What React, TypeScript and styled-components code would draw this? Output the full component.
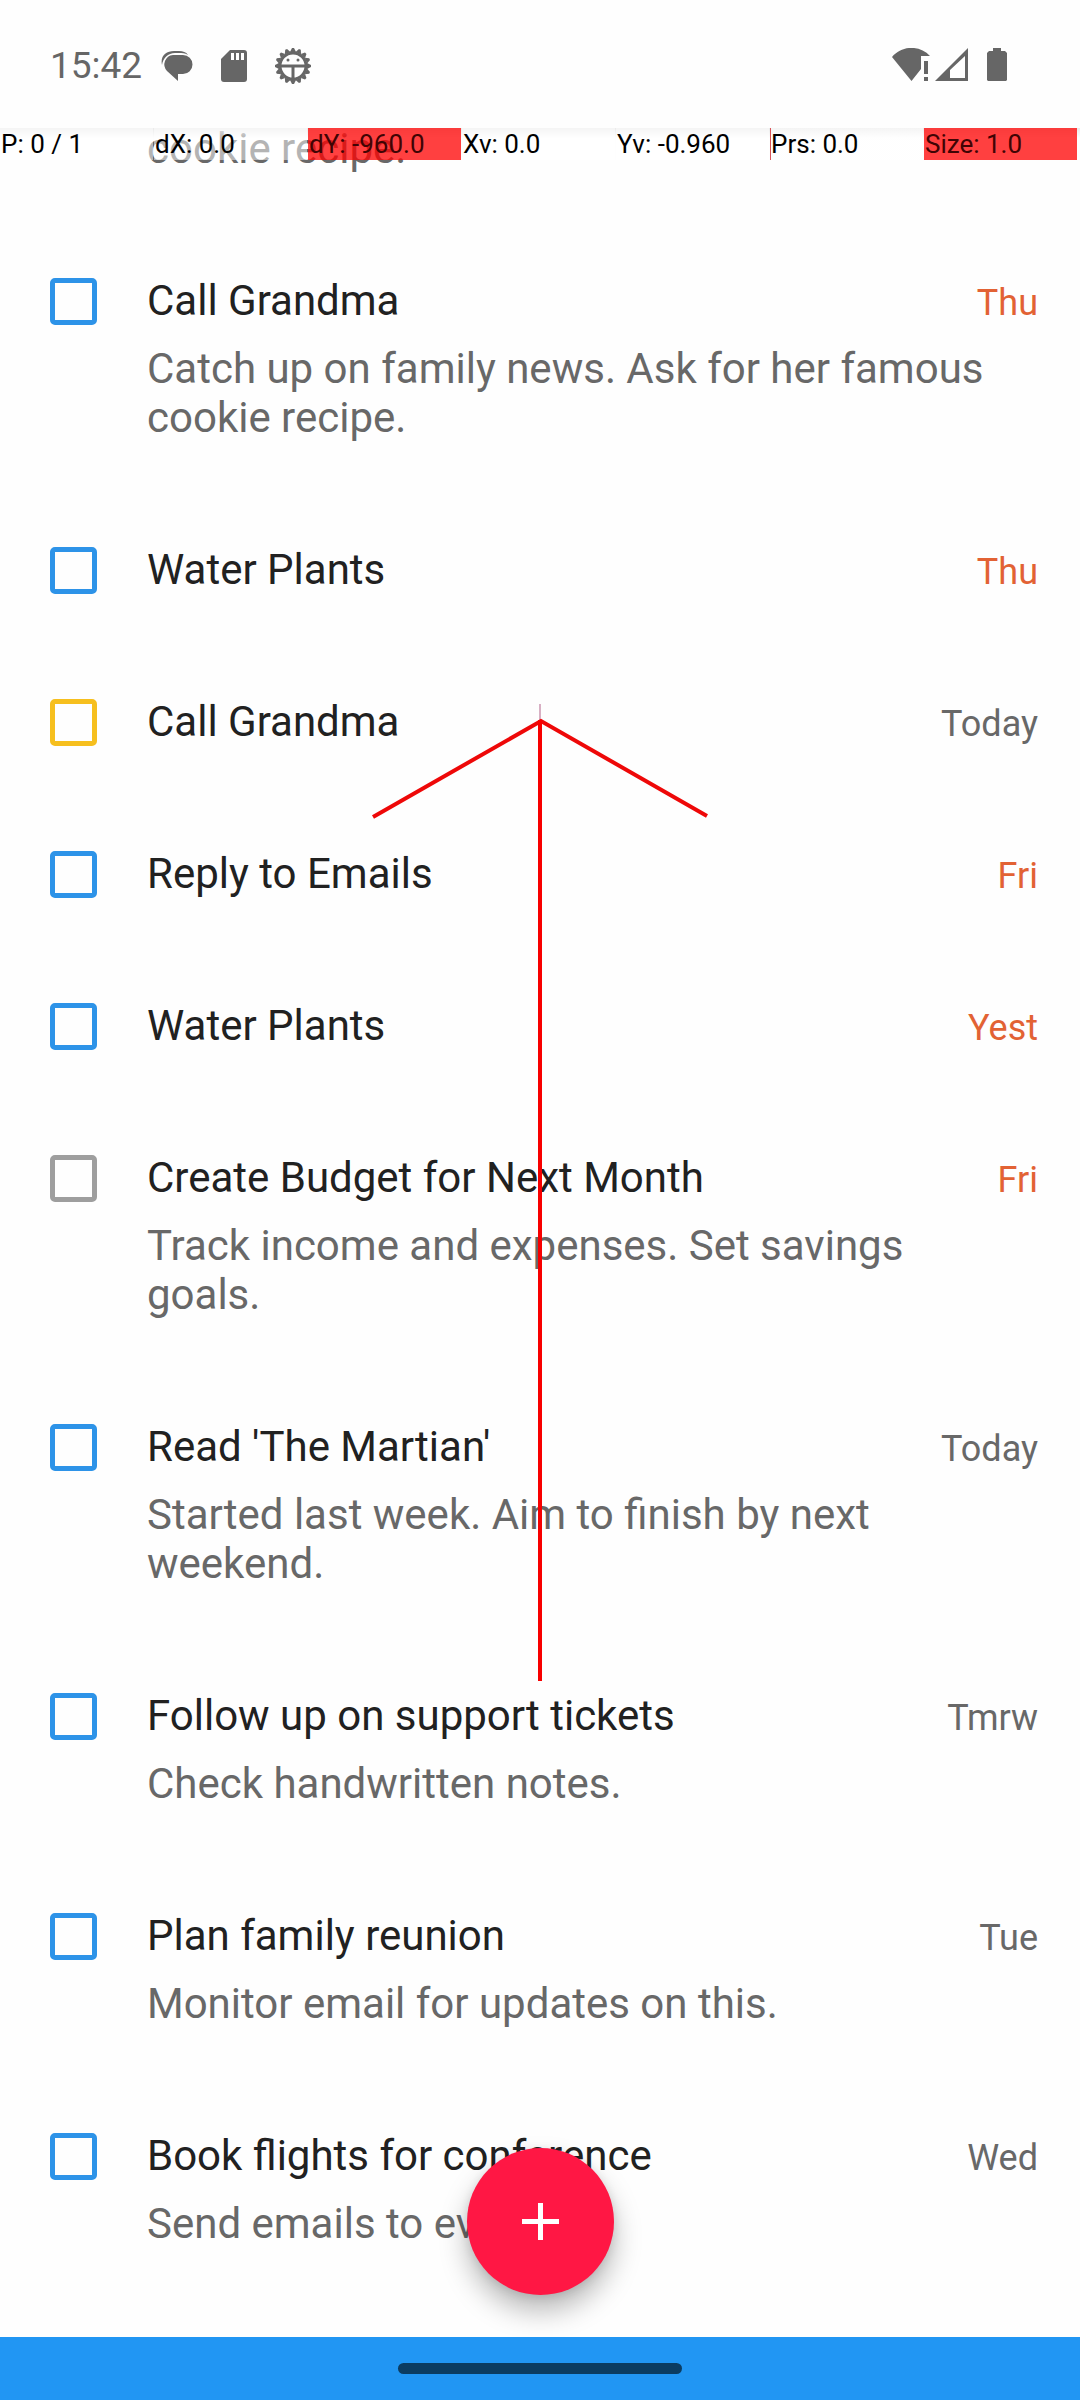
import React, { useLayoutEffect, useRef } from "react";
import styled, { createGlobalStyle } from "styled-components";

const GlobalStyle = createGlobalStyle`
  *, *::before, *::after { box-sizing: border-box; }
  body {
    margin: 0;
    background: #fefefe;
    font-family: Roboto, "Noto Sans", sans-serif;
  }
`;

const COLORS = {
  blue: "#2d93e8",
  yellow: "#f6bf1e",
  grey: "#9e9e9e",
  primary: "#212121",
  secondary: "#686868",
  overdue: "#e26234",
};

type Level = "blue" | "yellow" | "grey";

interface Task {
  title: string;
  note?: string;
  due: string;
  overdue?: boolean;
  level: Level;
}

const TASKS: Task[] = [
  { title: "Call Grandma", note: "Catch up on family news. Ask for her famous cookie recipe.", due: "Thu", overdue: true, level: "blue" },
  { title: "Call Grandma", note: "Catch up on family news. Ask for her famous cookie recipe.", due: "Thu", overdue: true, level: "blue" },
  { title: "Water Plants", due: "Thu", overdue: true, level: "blue" },
  { title: "Call Grandma", due: "Today", level: "yellow" },
  { title: "Reply to Emails", due: "Fri", overdue: true, level: "blue" },
  { title: "Water Plants", due: "Yest", overdue: true, level: "blue" },
  { title: "Create Budget for Next Month", note: "Track income and expenses. Set savings goals.", due: "Fri", overdue: true, level: "grey" },
  { title: "Read 'The Martian'", note: "Started last week. Aim to finish by next weekend.", due: "Today", level: "blue" },
  { title: "Follow up on support tickets", note: "Check handwritten notes.", due: "Tmrw", level: "blue" },
  { title: "Plan family reunion", note: "Monitor email for updates on this.", due: "Tue", level: "blue" },
  { title: "Book flights for conference", note: "Send emails to ev", due: "Wed", level: "blue" },
];

const READOUT = [
  { text: "P: 0 / 1", fill: "none" },
  { text: "dX: 0.0", fill: "none" },
  { text: "dY: -960.0", fill: "full" },
  { text: "Xv: 0.0", fill: "none" },
  { text: "Yv: -0.960", fill: "none" },
  { text: "Prs: 0.0", fill: "edge" },
  { text: "Size: 1.0", fill: "full" },
] as const;

const SCROLL_START = 171;

const Screen = styled.div`
  position: relative;
  display: grid;
  grid-template-rows: auto minmax(0, 1fr) auto;
  height: 100vh;
  overflow: hidden;
  background: #fefefe;
`;

const StatusBar = styled.header`
  display: flex;
  align-items: center;
  justify-content: space-between;
  height: 128px;
  padding: 0 73px 0 50px;
  color: #666666;
`;

const StatusGroup = styled.div<{ $gap: number }>`
  display: flex;
  align-items: center;
  gap: ${(p) => p.$gap}px;
`;

const Notifications = styled(StatusGroup)`
  padding-top: 3px;
`;

const Clock = styled.time`
  font-size: 37px;
  line-height: 44px;
`;

const StatusIcon = styled.svg`
  display: block;
  flex: none;
`;

const Viewport = styled.main`
  position: relative;
  min-height: 0;
`;

const Scroller = styled.div`
  height: 100%;
  overflow-y: auto;
  scrollbar-width: none;
`;

const TaskList = styled.ul`
  margin: 0;
  padding: 0 0 260px;
  list-style: none;
`;

const Row = styled.li`
  display: grid;
  grid-template-columns: 48px minmax(0, 1fr) auto;
  column-gap: 49px;
  align-items: baseline;
  padding: 50px 42px 53px 50px;
`;

const CheckBox = styled.input<{ $level: Level }>`
  appearance: none;
  align-self: end;
  width: 47px;
  height: 47px;
  margin: 0;
  border: 5px solid ${(p) => COLORS[p.$level]};
  border-radius: 5px;
  background: transparent;
`;

const Title = styled.label`
  color: ${COLORS.primary};
  font-size: 42px;
  line-height: 49px;
  white-space: nowrap;
`;

const Due = styled.span<{ $overdue?: boolean }>`
  color: ${(p) => (p.$overdue ? COLORS.overdue : COLORS.secondary)};
  font-size: 36px;
  line-height: 42px;
`;

const Note = styled.p`
  grid-column: 2 / 4;
  margin: 19px 40px 0 0;
  color: ${COLORS.secondary};
  font-size: 42px;
  line-height: 49px;
`;

const Readout = styled.div`
  position: absolute;
  inset: 0 0 auto;
  display: grid;
  grid-template-columns: repeat(7, minmax(0, 1fr));
  column-gap: 1px;
  height: 32px;
  padding-right: 3px;
  background: linear-gradient(rgba(225, 225, 225, 0.7), rgba(255, 255, 255, 0) 10px);
  pointer-events: none;
`;

const CELL_FILL = {
  none: "rgba(255, 255, 255, 0.5)",
  full: "rgba(255, 0, 0, 0.75)",
  edge: "linear-gradient(90deg, #d9555a 1px, rgba(255, 255, 255, 0.5) 1px)",
};

const Cell = styled.span<{ $fill: keyof typeof CELL_FILL }>`
  padding-left: 1px;
  background: ${(p) => CELL_FILL[p.$fill]};
  color: ${(p) => (p.$fill === "full" ? "#400404" : "#000000")};
  font-size: 26px;
  line-height: 32px;
  white-space: nowrap;
`;

const AddButton = styled.button`
  position: absolute;
  left: 50%;
  bottom: 42px;
  display: grid;
  place-items: center;
  width: 147px;
  height: 147px;
  margin-left: -73px;
  padding: 0;
  border: 0;
  border-radius: 50%;
  background: #ff1744;
  box-shadow: 0 16px 28px rgba(0, 0, 0, 0.28), 0 2px 10px rgba(0, 0, 0, 0.1);
`;

const GestureTrace = styled.svg`
  position: absolute;
  top: 704px;
  left: 50%;
  margin-left: -170px;
  pointer-events: none;
`;

const NavBar = styled.footer`
  position: relative;
  display: flex;
  align-items: center;
  justify-content: center;
  height: 63px;
  background: #2196f3;
`;

const Handle = styled.span`
  width: 284px;
  height: 11px;
  border-radius: 6px;
  background: #0b3c61;
`;

const GEAR_TEETH = Array.from({ length: 16 }, (_, i) => i * 22.5);

export default function App() {
  const scroller = useRef<HTMLDivElement>(null);

  useLayoutEffect(() => {
    if (scroller.current) scroller.current.scrollTop = SCROLL_START;
  }, []);

  return (
    <>
      <GlobalStyle />
      <Screen>
        <StatusBar>
          <Notifications $gap={19}>
            <Clock>15:42</Clock>
            <StatusGroup $gap={28}>
              <StatusIcon width="32" height="32" viewBox="0 0 32 32" aria-hidden="true">
                <path d="M1 15C-1 6 5 1 13 1h5c4 0 7 1 9 4-3-2-6-2-9-2h-4C7 3 2 8 1 15z" fill="currentColor" />
                <path d="M12 5h10a9.500 9.500 0 0 1 0 19h-5v7L6 21A9.500 9.500 0 0 1 12 5z" fill="currentColor" />
              </StatusIcon>
              <StatusIcon width="26" height="32" viewBox="0 0 26 32" aria-hidden="true">
                <path d="M9 0h14a3 3 0 0 1 3 3v26a3 3 0 0 1-3 3H3a3 3 0 0 1-3-3V9z" fill="currentColor" />
                <path d="M10 3h3v7h-3zM15 3h3v7h-3zM20 3h3v7h-3z" fill="#fefefe" />
              </StatusIcon>
              <StatusIcon width="36" height="36" viewBox="-18 -18 36 36" aria-hidden="true">
                {GEAR_TEETH.map((angle) => (
                  <path key={angle} d="M-3-14L-1-18H1L3-14z" fill="currentColor" transform={`rotate(${angle})`} />
                ))}
                <circle r="13" fill="none" stroke="currentColor" strokeWidth="3" />
                <path d="M-12 0H12M0 0V12" fill="none" stroke="currentColor" strokeWidth="3" />
                <circle cx="-5" cy="-6" r="1.500" fill="currentColor" />
                <circle cx="5" cy="-6" r="1.500" fill="currentColor" />
              </StatusIcon>
            </StatusGroup>
          </Notifications>
          <StatusGroup $gap={19}>
            <StatusGroup $gap={4}>
              <StatusIcon width="39" height="33" viewBox="0 0 39 33" aria-hidden="true">
                <path d="M0 9C10-3 28-3 38 8H29V21L19.500 33z" fill="currentColor" />
                <path d="M32 13h4v13h-4zM32 29h4v4h-4z" fill="currentColor" />
              </StatusIcon>
              <StatusIcon width="33" height="33" viewBox="0 0 33 33" aria-hidden="true">
                <path fillRule="evenodd" d="M0 33L33 0V33zM15 22V30H30V8z" fill="currentColor" />
              </StatusIcon>
            </StatusGroup>
            <StatusIcon width="20" height="33" viewBox="0 0 20 33" aria-hidden="true">
              <path d="M6 0h8v3h4l2 2v27l-1 1H1l-1-1V5l2-2h4z" fill="currentColor" />
            </StatusIcon>
          </StatusGroup>
        </StatusBar>

        <Viewport>
          <Scroller ref={scroller}>
            <TaskList>
              {TASKS.map((task, i) => (
                <Row key={i}>
                  <CheckBox type="checkbox" id={`task-${i}`} $level={task.level} />
                  <Title htmlFor={`task-${i}`}>{task.title}</Title>
                  <Due $overdue={task.overdue}>{task.due}</Due>
                  {task.note && <Note>{task.note}</Note>}
                </Row>
              ))}
            </TaskList>
          </Scroller>
          <Readout>
            {READOUT.map((cell) => (
              <Cell key={cell.text} $fill={cell.fill}>{cell.text}</Cell>
            ))}
          </Readout>
          <AddButton type="button" aria-label="Add task">
            <svg width="37" height="37" viewBox="0 0 37 37" aria-hidden="true">
              <path d="M0 18.500H37M18.500 0V37" stroke="#ffffff" strokeWidth="5" />
            </svg>
          </AddButton>
        </Viewport>

        <NavBar>
          <Handle />
        </NavBar>

        <GestureTrace width="340" height="980" viewBox="0 0 340 980" aria-hidden="true">
          <path d="M170 0V16" stroke="#d8b0c4" strokeWidth="2" />
          <path d="M3 113L171 17L337 112" fill="none" stroke="#ee0808" strokeWidth="4" />
          <path d="M170 16V977" stroke="#f80000" strokeWidth="4" />
        </GestureTrace>
      </Screen>
    </>
  );
}
